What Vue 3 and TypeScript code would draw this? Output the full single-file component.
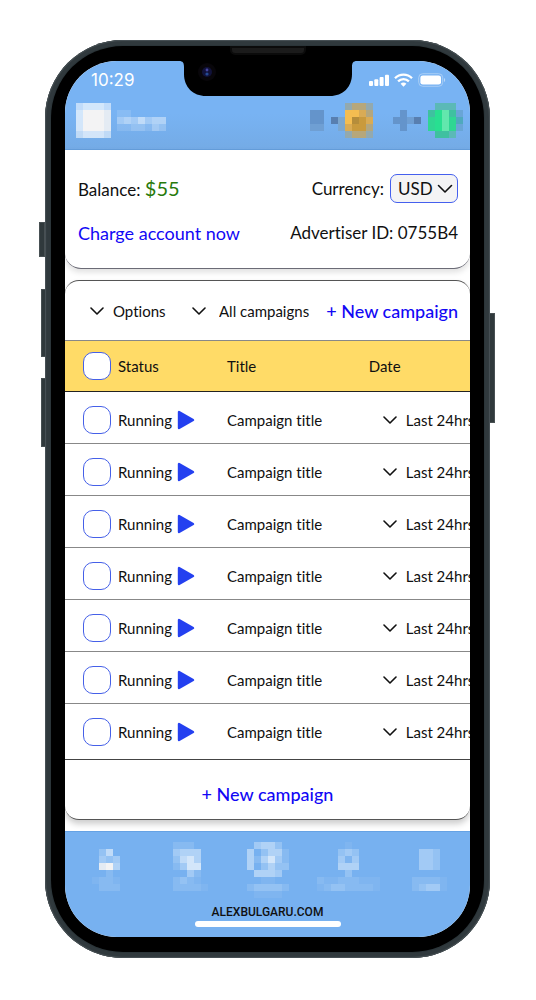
<script setup lang="ts">
import { ref } from 'vue'

interface Cell { x: number; y: number; fill: string }

const palette: Record<string, string> = {
  '1': 'rgba(255,255,255,.06)',
  '2': 'rgba(255,255,255,.12)',
  '3': 'rgba(255,255,255,.22)',
  '4': 'rgba(255,255,255,.32)',
  '5': 'rgba(255,255,255,.42)',
  '6': 'rgba(255,255,255,.54)',
  '7': 'rgba(255,255,255,.68)',
  '8': '#e4ebf3',
  '9': '#f3f3f4',
  a: '#6f9fd3',
  b: '#6494cb',
  c: '#587fb0',
  d: '#7ca7cf',
  e: '#93a9ae',
  f: '#b6a77b',
  g: '#d9ab55',
  h: '#f4bd51',
  i: '#c99a3d',
  j: '#b58d3b',
  k: '#b3a67e',
  m: '#5bb9b7',
  n: '#3fc0a0',
  o: '#2fd693',
  p: '#28df91',
  q: '#62e7ad',
  r: '#4fa9bd',
  s: '#69a5d6',
}

function cells(rows: string[]): Cell[] {
  return rows.flatMap((row, y) =>
    [...row].flatMap((key, x) => (palette[key] ? [{ x, y, fill: palette[key] }] : [])),
  )
}

const avatar = ['67776', '79998', '79998', '79998', '67776']
const userName = ['22.....', '4546455', '2233243']
const coins = [
  '.....effe',
  'bb...hhgk',
  'bb.cdhjig',
  'aa..dgiik',
  '.....effe',
]
const wallet = [
  '......mmm.',
  '.b...npqns',
  'bbac.opqor',
  '.b...opqos',
  '......nnm.',
]

const tabs: { name: string; rows: string[] }[] = [
  { name: 'Home', rows: ['....', '.36.', '.434', '.895', '..2.', '1221', '.222', '....'] },
  { name: 'Sites', rows: ['.222..', '.4555.', '.3675.', '.2477.', '...42.', '.2321.', '.22221', '......'] },
  { name: 'Campaigns', rows: ['.4553.', '5.3552', '525742', '5.3533', '.5554.', '..11..', '233332', '.1111.'] },
  { name: 'Statistics', rows: ['....1....', '...343...', '...414...', '...555...', '....3....', '211222111', '123322221', '.........'] },
  { name: 'Menu', rows: ['.....', '.443.', '.443.', '.443.', '.....', '22221', '23441', '.....'] },
]

const currency = ref('USD')
const allChecked = ref(false)
const campaigns = ref(
  Array.from({ length: 7 }, (_, id) => ({ id, checked: false, status: 'Running', title: 'Campaign title' })),
)

function toggleAll() {
  campaigns.value.forEach((c) => { c.checked = allChecked.value })
}
</script>

<template>
  <main class="phone">
    <i class="key mute"></i>
    <i class="key up"></i>
    <i class="key down"></i>
    <i class="key power"></i>
    <div class="bezel">
      <i class="speaker"></i>
      <div class="screen">
        <svg class="notch" width="178" height="35" viewBox="0 0 178 35" aria-hidden="true">
          <path d="M0 0H178C174 0 173 2 173 6V13C173 26 164 35 151 35H27C14 35 5 26 5 13V6C5 2 4 0 0 0Z" fill="#000" />
          <circle cx="28" cy="11" r="9" fill="#08060a" />
          <circle cx="28" cy="11" r="5" fill="#11123a" />
          <circle cx="28" cy="9" r="1.4" fill="#4546a0" />
          <circle cx="28" cy="13" r="1.6" fill="#244a93" />
        </svg>

        <header class="top">
          <div class="status">
            <time>10:29</time>
            <div class="signals" aria-hidden="true">
              <svg width="20" height="14" viewBox="0 0 20 14" fill="#fff">
                <rect x="0" y="8" width="4" height="5" rx="1" />
                <rect x="5.3" y="6.3" width="4" height="6.7" rx="1" />
                <rect x="10.6" y="4" width="4" height="9" rx="1" />
                <rect x="16" y="1.7" width="4" height="11.3" rx="1" />
              </svg>
              <svg width="19" height="14" viewBox="0 0 19 14" fill="none" stroke="#fff" stroke-width="2.3">
                <path d="M1 5.3C5.7 .4 13.3 .4 18 5.3" />
                <path d="M4.1 8.4C7.1 5.3 11.9 5.3 14.9 8.4" />
                <path d="M9.5 13.7L6.6 10.8C8.2 9.2 10.8 9.2 12.4 10.8Z" fill="#fff" stroke="none" />
              </svg>
              <svg width="28" height="14" viewBox="0 0 28 14">
                <rect x=".7" y=".7" width="24" height="12.6" rx="4" fill="none" stroke="#a9cef6" />
                <rect x="2.4" y="2.4" width="20.6" height="9.2" rx="2.4" fill="#fff" />
                <path d="M26 5C27.6 5.6 27.6 8.4 26 9Z" fill="#b9d7f7" />
              </svg>
            </div>
          </div>
          <div class="profile">
            <svg class="mosaic" width="35" height="35" viewBox="0 0 5 5" aria-hidden="true">
              <rect v-for="c in cells(avatar)" :key="`${c.x}-${c.y}`" :x="c.x" :y="c.y" width="1" height="1" :fill="c.fill" />
            </svg>
            <svg class="mosaic" width="49" height="21" viewBox="0 0 7 3" aria-hidden="true">
              <rect v-for="c in cells(userName)" :key="`${c.x}-${c.y}`" :x="c.x" :y="c.y" width="1" height="1" :fill="c.fill" />
            </svg>
            <svg class="mosaic coins" width="63" height="35" viewBox="0 0 9 5" aria-hidden="true">
              <rect v-for="c in cells(coins)" :key="`${c.x}-${c.y}`" :x="c.x" :y="c.y" width="1" height="1" :fill="c.fill" />
            </svg>
            <svg class="mosaic wallet" width="70" height="35" viewBox="0 0 10 5" aria-hidden="true">
              <rect v-for="c in cells(wallet)" :key="`${c.x}-${c.y}`" :x="c.x" :y="c.y" width="1" height="1" :fill="c.fill" />
            </svg>
          </div>
        </header>

        <section class="account">
          <div class="line">
            <p>Balance: <strong>$55</strong></p>
            <div class="currency">
              <label for="currency">Currency:</label>
              <span class="box">
                <select id="currency" v-model="currency"><option>USD</option></select>
                <svg width="16" height="10" viewBox="0 0 16 10"><path d="M1.5 1.5L8 8L14.5 1.5" /></svg>
              </span>
            </div>
          </div>
          <div class="line">
            <a class="charge" href="#charge">Charge account now</a>
            <p>Advertiser ID: 0755B4</p>
          </div>
        </section>

        <section class="campaigns">
          <div class="tools">
            <span class="drop">
              <svg width="14" height="10" viewBox="0 0 14 10"><path d="M1 2L7 8L13 2" /></svg>
              <select aria-label="Options"><option>Options</option></select>
            </span>
            <span class="drop filter">
              <svg width="14" height="10" viewBox="0 0 14 10"><path d="M1 2L7 8L13 2" /></svg>
              <select aria-label="Campaign filter"><option>All campaigns</option></select>
            </span>
            <button type="button" class="new">+ New campaign</button>
          </div>
          <table>
            <colgroup><col class="c-status" /><col class="c-title" /><col /></colgroup>
            <thead>
              <tr>
                <th>
                  <label class="check"><input v-model="allChecked" type="checkbox" @change="toggleAll" />Status</label>
                </th>
                <th>Title</th>
                <th>Date</th>
              </tr>
            </thead>
            <tbody>
              <tr v-for="c in campaigns" :key="c.id">
                <td>
                  <div class="state">
                    <label class="check"><input v-model="c.checked" type="checkbox" />{{ c.status }}</label>
                    <svg class="play" width="18" height="20" viewBox="0 0 18 20"><path d="M2 2V18L16 10Z" fill="#2440f0" stroke="#2440f0" stroke-width="2.4" stroke-linejoin="round" /></svg>
                  </div>
                </td>
                <td>{{ c.title }}</td>
                <td class="date">
                  <span class="drop">
                    <svg width="14" height="10" viewBox="0 0 14 10"><path d="M1 2L7 8L13 2" /></svg>
                    <select aria-label="Period"><option>Last 24hrs</option></select>
                  </span>
                </td>
              </tr>
            </tbody>
          </table>
          <div class="more"><button type="button" class="new">+ New campaign</button></div>
        </section>

        <footer class="bottom">
          <nav>
            <a v-for="t in tabs" :key="t.name" :href="`#${t.name.toLowerCase()}`" :aria-label="t.name">
              <svg class="mosaic" :width="t.rows[0].length * 7" height="56" :viewBox="`0 0 ${t.rows[0].length} 8`">
                <rect v-for="c in cells(t.rows)" :key="`${c.x}-${c.y}`" :x="c.x" :y="c.y" width="1" height="1" :fill="c.fill" />
              </svg>
            </a>
          </nav>
          <p class="site">ALEXBULGARU.COM</p>
          <i class="home"></i>
        </footer>
      </div>
    </div>
  </main>
</template>

<style>
body { margin: 0; background: #fff; }
</style>

<style scoped>
* { box-sizing: border-box; }
p { margin: 0; }
.phone {
  position: relative;
  margin: 40px 46px 42px 45px;
  padding: 6px;
  border-radius: 78px;
  background: #2b3539;
  box-shadow: inset 0 0 1px 1px #4a5357, inset 0 0 0 5px #30393d;
  font-family: Lato, "Liberation Sans", sans-serif;
  font-size: 15px;
  font-variant-ligatures: none;
  color: #101010;
}
.key { position: absolute; width: 6px; background: #30393c; border: 1px solid #485053; z-index: -1; }
.mute { left: -6px; top: 182px; height: 35px; }
.up { left: -4px; top: 249px; height: 68px; }
.down { left: -4px; top: 338px; height: 69px; }
.power { right: -5px; top: 273px; height: 110px; }
.bezel { position: relative; padding: 15px 14px; border-radius: 72px; background: #000; }
.speaker {
  position: absolute; top: 0; left: 50%; width: 76px; height: 9px; margin-left: -38px;
  background: #1b1b1b; border: 2px solid #0b0b0b; border-radius: 0 0 5px 5px;
}
.screen { position: relative; overflow: hidden; border-radius: 52px; background: #fff; }
.notch { position: absolute; top: 0; left: 50%; margin-left: -89px; z-index: 2; }
.mosaic { display: block; shape-rendering: crispEdges; flex: none; }

.top { padding-bottom: 12px; background: linear-gradient(#78b3f3 60%, #74abe6); border-bottom: 1px solid #659fdd; }
.status { display: flex; justify-content: space-between; align-items: center; height: 38px; padding: 0 24px 0 26px; }
.status time { font: 17px/20px Inter, sans-serif; color: #fff; }
.signals { display: flex; gap: 5px; }
.profile { display: flex; align-items: center; gap: 6px; padding: 4px 7px 0 11px; height: 38px; }
.coins { margin-left: auto; }
.wallet { margin-left: 14px; }

.account {
  position: relative;
  display: grid; gap: 19px; padding: 24px 12px 24px 13px;
  border: solid #6b6b76; border-width: 0 0 1px; border-radius: 0 0 16px 16px;
  box-shadow: 0 3px 6px #0002; font-size: 17px; line-height: 22px;
}
.line { display: flex; justify-content: space-between; align-items: center; }
.line strong { font-weight: 400; font-size: 20px; color: #287a0b; }
a { color: #1208f5; text-decoration: none; }
.charge { font-size: 18px; }
.currency { display: flex; align-items: center; gap: 6px; }
.box {
  display: flex; align-items: center; height: 29px; padding: 0 4px 0 7px; gap: 4px;
  border: 1px solid #4560ee; border-radius: 7px; background: #f4f4f5;
}
select {
  appearance: none; border: 0; padding: 0; margin: 0; background: none;
  font: inherit; font-variant-ligatures: none; color: inherit; outline: none;
}
.box path, .drop path { fill: none; stroke: #111; stroke-width: 1.6; stroke-linecap: round; stroke-linejoin: round; }

.campaigns {
  position: relative;
  margin: 11px 0; border: solid #555; border-width: 1px 0; border-radius: 14px;
  box-shadow: 0 4px 6px #0003; background: #fff; overflow: hidden;
}
.tools { display: flex; align-items: center; height: 59px; padding: 0 12px 0 25px; gap: 12px; }
.drop { display: flex; align-items: center; gap: 9px; white-space: nowrap; flex: none; }
.drop svg { flex: none; }
.filter { margin-left: 14px; gap: 13px; }
.new {
  border: 0; background: none; padding: 0; margin-left: auto; white-space: nowrap;
  font: 500 18px/22px Lato, sans-serif; color: #1208f5;
}
table { width: 100%; table-layout: fixed; border-collapse: separate; border-spacing: 0; }
.c-status { width: 40%; }
.c-title { width: 35%; }
th, td { padding: 14px 0 9px; text-align: left; font-weight: 400; line-height: 20px; border-bottom: 1px solid #888; white-space: nowrap; }
th { padding: 11px 0; background: #ffdb67; border-top: 1px solid #888; border-bottom-color: #222; }
th:first-child, td:first-child { padding-left: 18px; }
tbody tr:last-child td { padding-bottom: 13px; border-color: #444; }
.state { display: flex; align-items: center; gap: 5px; }
.check { display: flex; align-items: center; gap: 7px; }
.check input {
  appearance: none; width: 28px; height: 28px; margin: 0;
  border: 1px solid #4560e8; border-radius: 10px; background: #fff;
}
.check input:checked { background: #4560e8; }
.play { display: block; }
td.date { padding-left: 14px; overflow: hidden; }
.more { display: flex; justify-content: center; padding: 23px 0 14px; }
.more .new { margin: 0; }

.bottom { display: flex; flex-direction: column; align-items: center; padding: 10px 0; background: #77b1f0; border-top: 1px solid #65a2e4; }
nav { display: grid; grid-template-columns: repeat(5, 1fr); width: 100%; }
nav a { display: flex; justify-content: center; }
.site { margin-top: 6px; font: 500 12px/16px Roboto, sans-serif; }
.home { width: 146px; height: 6px; margin: 1px 0 0; border-radius: 3px; background: #fff; }
</style>
